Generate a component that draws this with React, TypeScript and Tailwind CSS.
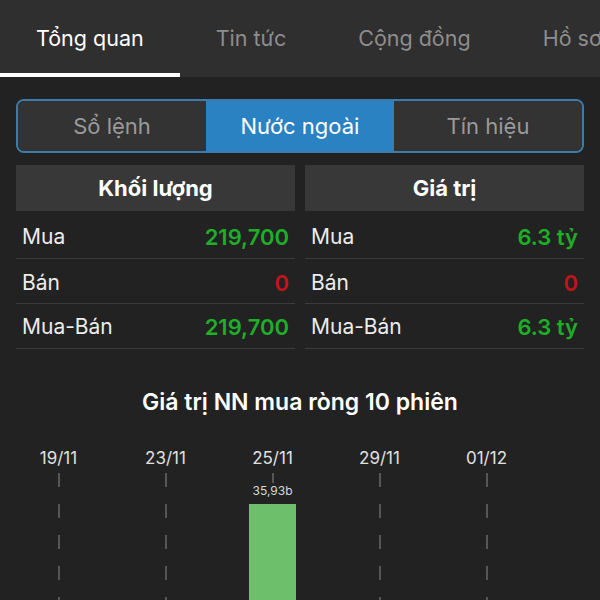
import React from 'react';

const tabs = ['Tổng quan', 'Tin tức', 'Cộng đồng', 'Hồ sơ'];
const segments = ['Sổ lệnh', 'Nước ngoài', 'Tín hiệu'];
const dates = ['19/11', '23/11', '25/11', '29/11', '01/12'];

type Row = { label: string; value: string; up: boolean; h: string };

const volumeRows: Row[] = [
  { label: 'Mua', value: '219,700', up: true, h: 'h-[48px] pt-[5px]' },
  { label: 'Bán', value: '0', up: false, h: 'h-[45px] pt-[4px]' },
  { label: 'Mua-Bán', value: '219,700', up: true, h: 'h-[45px] pt-[2px]' },
];

const valueRows: Row[] = [
  { label: 'Mua', value: '6.3 tỷ', up: true, h: 'h-[48px] pt-[5px]' },
  { label: 'Bán', value: '0', up: false, h: 'h-[45px] pt-[4px]' },
  { label: 'Mua-Bán', value: '6.3 tỷ', up: true, h: 'h-[45px] pt-[2px]' },
];

const StatTable = ({ title, rows }: { title: string; rows: Row[] }) => (
  <div className="flex-1 flex flex-col">
    <div className="h-[46px] bg-[#383838] flex items-center justify-center text-[22px] font-bold text-white">
      {title}
    </div>
    {rows.map(r => (
      <div
        key={r.label}
        className={`${r.h} border-b border-[#3a3a3a] flex items-center justify-between px-[6px] text-[21px]`}
      >
        <span className="text-[#ececec]">{r.label}</span>
        <span className={`text-[22px] font-semibold ${r.up ? 'text-[#1fae28]' : 'text-[#c3141b]'}`}>{r.value}</span>
      </div>
    ))}
  </div>
);

const DashedLine = () => (
  <svg width="2" height="130" className="block">
    <line x1="1" y1="0" x2="1" y2="130" stroke="#7a7a7a" strokeWidth="1.2" strokeDasharray="14 17" />
  </svg>
);

export default function App() {
  return (
    <div className="w-[600px] h-[600px] overflow-hidden bg-[#222222] font-['Inter','Noto_Sans',sans-serif]">
      {/* Top tabs */}
      <div className="h-[77px] bg-[#2f2f2f] flex whitespace-nowrap overflow-hidden">
        {tabs.map((t, i) => (
          <div
            key={t}
            className={`px-[36px] flex items-center text-[21.5px] shrink-0 ${
              i === 0 ? 'text-white border-b-[4px] border-white pt-[4px]' : 'text-[#8d8d8d]'
            }`}
          >
            {t}
          </div>
        ))}
      </div>

      <div className="px-[16px]">
        {/* Segmented control */}
        <div className="mt-[22px] h-[54px] rounded-[8px] border-2 border-[#3b7cab] flex overflow-hidden">
          {segments.map((s, i) => (
            <div
              key={s}
              className={`flex-1 flex items-center justify-center text-[22px] ${
                i === 1 ? 'bg-[#2a82c3] text-white' : 'bg-[#333333] text-[#9a9a9a]'
              }`}
            >
              {s}
            </div>
          ))}
        </div>

        {/* Tables */}
        <div className="mt-[12px] flex gap-[10px]">
          <StatTable title="Khối lượng" rows={volumeRows} />
          <StatTable title="Giá trị" rows={valueRows} />
        </div>
      </div>

      {/* Chart */}
      <div className="mt-[39px] h-[28px] flex items-center justify-center text-[23px] font-semibold text-white">
        Giá trị NN mua ròng 10 phiên
      </div>
      <div className="mt-[33px] flex pl-[5px]">
        {dates.map((d, i) => (
          <div key={d} className="w-[107px] flex flex-col items-center relative">
            <div className="h-[20px] flex items-center text-[17px] text-[#e0e0e0]">{d}</div>
            <div className="mt-[4px]">
              <DashedLine />
            </div>
            {i === 2 && (
              <>
                <div className="absolute top-[34px] text-[12px] text-[#d8d8d8] bg-[#222222] leading-[16px] px-[1px]">
                  35,93b
                </div>
                <div className="absolute top-[55px] w-[47px] h-[120px] bg-[#6dbf6b]" />
              </>
            )}
          </div>
        ))}
      </div>
    </div>
  );
}
